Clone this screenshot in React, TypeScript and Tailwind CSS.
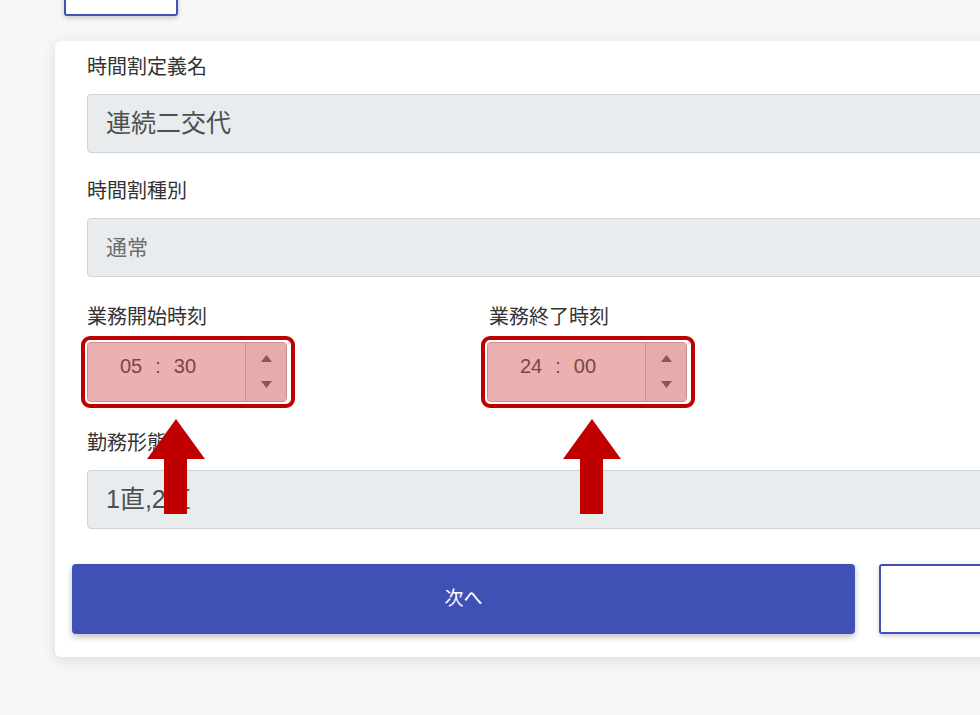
import React from 'react'

const font = { fontFamily: '"Liberation Sans", "Noto Sans CJK JP", sans-serif' }

function Field({ label, value, muted }: { label: string; value: string; muted?: boolean }) {
  return (
    <div>
      <div className="mb-[12px] h-[30px] text-[20px] leading-[30px] text-[#333]">{label}</div>
      <div
        className={
          'flex h-[59px] items-center rounded-[4px] border border-[#ced4da] bg-[#e9ecef] pl-[18px] ' +
          (muted ? 'text-[21px] text-[#6c6c6c]' : 'text-[25px] text-[#4f4f4f]')
        }
      >
        {value}
      </div>
    </div>
  )
}

function TimeInput({ hh, mm }: { hh: string; mm: string }) {
  return (
    <div className="relative w-[200px]">
      {/* red highlight frame */}
      <div className="pointer-events-none absolute -top-[6px] -left-[6px] -right-[8px] -bottom-[6px] rounded-[9px] border-[4px] border-[#c00000]" />
      <div className="flex h-[60px] rounded-[4px] border border-[#c98f8f] bg-[#ebb0b0]">
        <div className="flex flex-1 items-start gap-[13px] pt-[13px] pl-[32px] text-[20px] leading-[20px] text-[#7a4747]">
          <span>{hh}</span>
          <span>:</span>
          <span>{mm}</span>
        </div>
        <div className="flex w-[41px] flex-col items-center justify-between border-l border-[#c99292] bg-[#e6abab] pt-[12px] pb-[13px]">
          <svg width="11" height="7" viewBox="0 0 11 7">
            <path d="M5.5 0 L11 7 L0 7 Z" fill="#8a5656" />
          </svg>
          <svg width="11" height="7" viewBox="0 0 11 7">
            <path d="M0 0 L11 0 L5.5 7 Z" fill="#8a5656" />
          </svg>
        </div>
      </div>
    </div>
  )
}

function UpArrow() {
  return (
    <svg width="60" height="95" viewBox="0 0 60 95">
      <path d="M30 0 L59 40 L41 40 L41 95 L18 95 L18 40 L1 40 Z" fill="#c00000" />
    </svg>
  )
}

export default function App() {
  return (
    <div className="relative h-[715px] w-[980px] overflow-hidden bg-[#f7f7f7]" style={font}>
      {/* top button remnant */}
      <div className="-mt-[44px] ml-[64px] h-[60px] w-[114px] rounded-[3px] border-2 border-[#3f51b5] bg-white shadow-[0_2px_5px_rgba(0,0,0,0.2)]" />

      {/* Card */}
      <div className="mt-[25px] ml-[55px] w-[1000px] rounded-[6px] bg-white pt-[11px] pr-[20px] pb-[23px] pl-[32px] shadow-[0_3px_14px_rgba(0,0,0,0.12)]">
        <div className="flex flex-col gap-[23px]">
          <Field label="時間割定義名" value="連続二交代" />
          <Field label="時間割種別" value="通常" muted />

          <div className="relative mt-[2px] grid grid-cols-[402px_1fr]">
            <div>
              <div className="mb-[10px] h-[30px] text-[20px] leading-[30px] text-[#333]">業務開始時刻</div>
              <TimeInput hh="05" mm="30" />
            </div>
            <div>
              <div className="mb-[10px] h-[30px] text-[20px] leading-[30px] text-[#333]">業務終了時刻</div>
              <div className="-ml-[2px]">
                <TimeInput hh="24" mm="00" />
              </div>
            </div>
          </div>

          <div className="relative mt-[3px]">
            <Field label="勤務形態" value="1直,2直" />
            {/* annotation arrows */}
            <div className="absolute -top-[9px] left-[59px]">
              <UpArrow />
            </div>
            <div className="absolute -top-[9px] left-[475px]">
              <UpArrow />
            </div>
          </div>
        </div>

        <div className="mt-[35px] -ml-[15px] flex gap-[24px]">
          <button className="flex h-[70px] w-[783px] shrink-0 items-center justify-center rounded-[4px] bg-[#3f51b5] text-[19px] text-white shadow-[0_3px_6px_rgba(0,0,0,0.25)]">
            次へ
          </button>
          <button className="h-[70px] w-[200px] shrink-0 rounded-[3px] border-2 border-[#3f51b5] bg-white shadow-[0_2px_5px_rgba(0,0,0,0.2)]" />
        </div>
      </div>
    </div>
  )
}
